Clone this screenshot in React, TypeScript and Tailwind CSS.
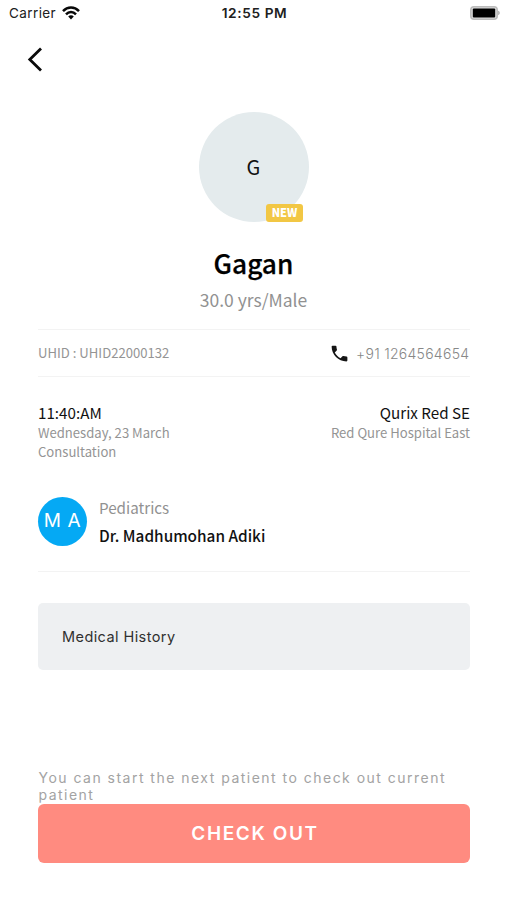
import React from "react";

const sans = "font-['Noto_Sans_CJK_JP','Noto_Sans_CJK_SC',sans-serif]";
const inter = "font-['Inter',sans-serif]";

function StatusBar() {
  return (
    <header className={`${inter} grid h-7 grid-cols-3 items-center pb-px pl-[9px] pr-[7px] text-[13.5px] text-[#202020]`}>
      <div className="flex items-center gap-[6px]">
        <span className="tracking-[0.4px]">Carrier</span>
        <svg className="-mt-px" width="18" height="14" viewBox="0 0 18 14" fill="none" stroke="#080808" strokeWidth="2.5">
          <path d="M1 5.1C5.6.4 12.4.4 17 5.1" />
          <path d="M4 8.3C6.9 5.3 11.1 5.3 14 8.3" />
          <path d="M6.2 10.4c1.6-1.6 4-1.6 5.6 0L9 13.5z" fill="#080808" stroke="none" />
        </svg>
      </div>
      <span className="whitespace-nowrap text-center text-[13.7px] font-semibold tracking-[0.6px]">12:55 PM</span>
      <svg className="-mt-px justify-self-end" width="30" height="14" viewBox="0 0 30 14">
        <rect x=".8" y=".8" width="26.4" height="12.4" rx="3.2" fill="#ddd" stroke="#bcbcbc" strokeWidth="1.6" />
        <rect x="2.8" y="2.6" width="22.4" height="8.8" rx="1" fill="#000" />
        <path d="M28.2 4.8c2 .6 2 3.8 0 4.4z" fill="#aaa" />
      </svg>
    </header>
  );
}

export default function App() {
  return (
    <main className={`${sans} flex h-[900px] w-[507px] flex-col bg-white text-[#111]`}>
      <StatusBar />
      <div className="h-[84px] pl-[26px] pt-[18px]">
        <svg width="18" height="27" viewBox="0 0 18 27" fill="none" stroke="#0a0a0a" strokeWidth="2.8" strokeLinecap="square">
          <path d="M14 3.5 3.8 13.5 14 23.5" />
        </svg>
      </div>
      <div className="relative ml-[199px] flex h-[110px] w-[110px] items-center justify-center rounded-full bg-[#e4ebed] pr-px text-xl">
        G
        <span className="absolute bottom-0 right-[6px] flex h-[18px] w-[37px] items-center justify-center rounded-[3px] bg-[#f2c744] text-[11px] font-black text-white">
          NEW
        </span>
      </div>
      <h1 className="mt-[21px] text-center text-[26.3px] font-medium leading-10 text-black [-webkit-text-stroke:0.25px_#000]">Gagan</h1>
      <p className="mt-[4px] text-center text-[17.5px] leading-[26px] text-[#919191]">30.0 yrs/Male</p>

      <section className="ml-[38px] mt-[16px] flex h-[48px] w-[432px] items-center justify-between border-y border-[#f3f3f3] text-[#949494]">
        <span className="text-[13.1px]">UHID : UHID22000132</span>
        <div className="flex items-center gap-[6px] pr-px">
          <svg width="21" height="21" viewBox="0 0 24 24" fill="#151515">
            <path d="M6.62 10.79c1.44 2.83 3.76 5.14 6.59 6.59l2.2-2.2c.27-.27.67-.36 1.02-.24 1.12.37 2.33.57 3.57.57.55 0 1 .45 1 1V20c0 .55-.45 1-1 1-9.39 0-17-7.61-17-17 0-.55.45-1 1-1h3.5c.55 0 1 .45 1 1 0 1.25.2 2.45.57 3.57.11.35.03.74-.25 1.02l-2.2 2.2z" />
          </svg>
          <span className={`${inter} -mr-[0.3px] text-[14px] font-light tracking-[0.27px] text-[#888]`}>+91 1264564654</span>
        </div>
      </section>

      <section className="ml-[38px] mt-[25px] flex h-[95px] w-[432px] justify-between">
        <div>
          <p className="text-[15.2px] leading-5">11:40:AM</p>
          <p className="mt-px text-[13.1px] leading-[19px] text-[#949494]">Wednesday, 23 March</p>
          <p className="mt-px text-[13.1px] leading-[18px] text-[#949494]">Consultation</p>
        </div>
        <div className="text-right">
          <p className="text-[15.2px] leading-5">Qurix Red SE</p>
          <p className="mt-px text-[13.1px] leading-[19px] text-[#949494]">Red Qure Hospital East</p>
        </div>
      </section>

      <section className="ml-[38px] flex h-[75px] w-[432px] gap-3 border-b border-[#f3f3f3]">
        <div className={`${inter} flex h-[49px] w-[49px] items-center justify-center whitespace-nowrap rounded-full bg-[#05a9f4] text-[19px] tracking-[0.6px] text-white`}>
          M A
        </div>
        <div className="-mt-[2px]">
          <p className="text-[15.2px] leading-6 text-[#919191]">Pediatrics</p>
          <p className="mt-1 text-[15.35px] font-medium leading-6">Dr. Madhumohan Adiki</p>
        </div>
      </section>

      <div className={`${inter} ml-[38px] mt-[31px] flex h-[67px] w-[432px] items-center rounded-[5px] bg-[#eef0f2] pl-6 pt-px text-[14.5px] tracking-[0.42px] text-[#303030]`}>
        Medical History
      </div>

      <p className={`${inter} mx-[38px] mt-[99px] h-[35px] pl-[0.5px] text-[14px] leading-[17px] tracking-[1.48px] text-[#a3a3a3]`}>
        You can start the next patient to check out current<br />patient
      </p>
      <button className={`${inter} ml-[38px] h-[59px] w-[432px] rounded-[6px] bg-[#ff8b80] pl-[2px] pt-px text-[19px] font-semibold tracking-[1.6px] text-white`}>
        CHECK OUT
      </button>
    </main>
  );
}
